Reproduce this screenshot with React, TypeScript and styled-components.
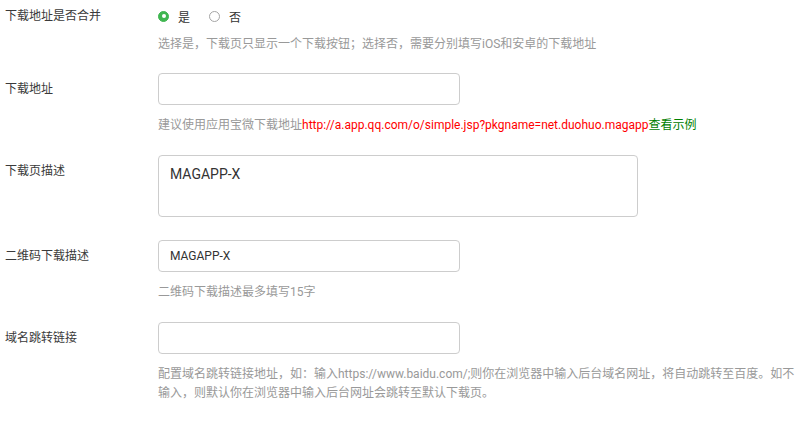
import React from "react";
import styled, { createGlobalStyle } from "styled-components";

const Global = createGlobalStyle`
  html, body { margin: 0; padding: 0; background: #fff; }
  body {
    font-family: Roboto, "Noto Sans CJK SC", sans-serif;
    font-size: 12px;
    color: #333;
  }
`;

const Form = styled.div`
  display: flex;
  flex-direction: column;
  width: 799px;
`;

const Item = styled.div<{ $mb?: number }>`
  display: grid;
  grid-template-columns: 158px 1fr;
  margin-bottom: ${(p) => (p.$mb ?? 20)}px;
`;

const Label = styled.div`
  padding-left: 5px;
  line-height: 32px;
  font-size: 12px;
  color: #3a3a3a;
  white-space: nowrap;
`;

const Field = styled.div`
  display: flex;
  flex-direction: column;
  min-width: 0;
`;

const RadioGroup = styled.div`
  display: flex;
  align-items: center;
  height: 32px;
`;

const RadioOption = styled.label`
  display: flex;
  align-items: center;
  gap: 9px;
  margin-right: 19px;
  font-size: 12px;
  color: #333;
`;

const RadioDot = styled.span<{ $checked?: boolean }>`
  box-sizing: border-box;
  width: 11px;
  height: 11px;
  border-radius: 50%;
  display: inline-flex;
  align-items: center;
  justify-content: center;
  background: ${(p) => (p.$checked ? "#3fb650" : "#fff")};
  border: 1px solid ${(p) => (p.$checked ? "#3fb650" : "#a5a5a5")};
  &::after {
    content: "";
    width: 4px;
    height: 4px;
    border-radius: 50%;
    background: #fff;
    display: ${(p) => (p.$checked ? "block" : "none")};
  }
`;

const Input = styled.div<{ $w?: number }>`
  box-sizing: border-box;
  width: ${(p) => p.$w ?? 302}px;
  height: 32px;
  border: 1px solid #cdcdcd;
  border-radius: 4px;
  padding: 0 11px;
  display: flex;
  align-items: center;
  font-size: 12px;
  color: #333;
`;

const TextArea = styled.div`
  box-sizing: border-box;
  width: 480px;
  height: 62px;
  border: 1px solid #cdcdcd;
  border-radius: 4px;
  padding: 8px 11px;
  font-size: 14px;
  line-height: 20px;
  color: #333;
`;

const Hint = styled.div<{ $mt?: number }>`
  margin-top: ${(p) => (p.$mt ?? 11)}px;
  font-size: 12px;
  line-height: 19px;
  color: #999;
`;

const Red = styled.span`
  color: #ff0000;
`;

const Green = styled.span`
  color: #008000;
`;

export default function App() {
  return (
    <>
      <Global />
      <Form>
        <Item $mb={19}>
          <Label>下载地址是否合并</Label>
          <Field>
            <RadioGroup>
              <RadioOption>
                <RadioDot $checked />
                是
              </RadioOption>
              <RadioOption>
                <RadioDot />
                否
              </RadioOption>
            </RadioGroup>
            <Hint $mt={3}>
              选择是，下载页只显示一个下载按钮；选择否，需要分别填写iOS和安卓的下载地址
            </Hint>
          </Field>
        </Item>
        <Item>
          <Label>下载地址</Label>
          <Field>
            <Input />
            <Hint>
              建议使用应用宝微下载地址
              <Red>http://a.app.qq.com/o/simple.jsp?pkgname=net.duohuo.magapp</Red>
              <Green>查看示例</Green>
            </Hint>
          </Field>
        </Item>
        <Item $mb={23}>
          <Label>下载页描述</Label>
          <Field>
            <TextArea>MAGAPP-X</TextArea>
          </Field>
        </Item>
        <Item>
          <Label>二维码下载描述</Label>
          <Field>
            <Input>MAGAPP-X</Input>
            <Hint>二维码下载描述最多填写15字</Hint>
          </Field>
        </Item>
        <Item>
          <Label>域名跳转链接</Label>
          <Field>
            <Input />
            <Hint>
              配置域名跳转链接地址，如：输入https://www.baidu.com/;则你在浏览器中输入后台域名网址，将自动跳转至百度。如不输入，则默认你在浏览器中输入后台网址会跳转至默认下载页。
            </Hint>
          </Field>
        </Item>
      </Form>
    </>
  );
}
